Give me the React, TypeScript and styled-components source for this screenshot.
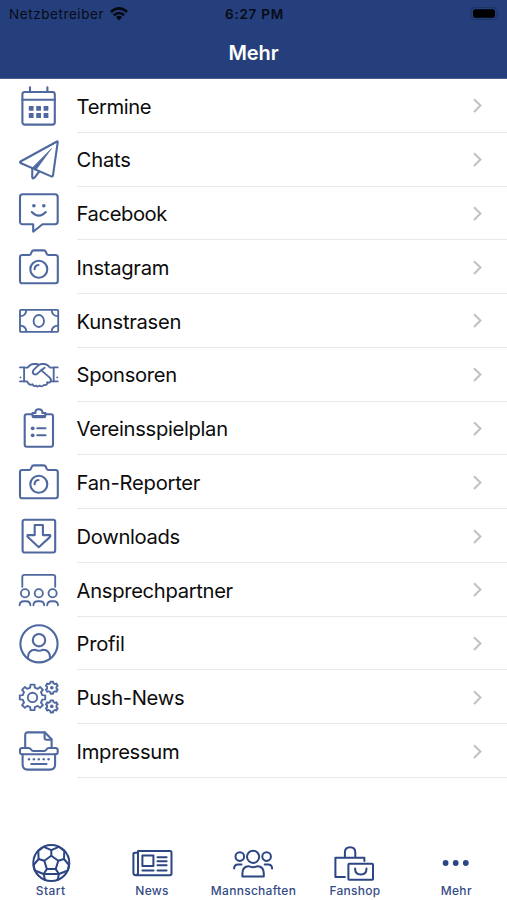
import React from "react";
import styled, { createGlobalStyle } from "styled-components";

const GlobalStyle = createGlobalStyle`
  * { box-sizing: border-box; }
  body { margin: 0; background: #fff; }
`;

const Screen = styled.div`
  width: 507px;
  height: 900px;
  display: flex;
  flex-direction: column;
  overflow: hidden;
  background: #fff;
  color: #0c0c0c;
  font-family: Inter, "Liberation Sans", sans-serif;
`;

const Header = styled.header`
  height: 79px;
  flex: none;
  background: #253f7c;
  border-bottom: 1px solid #4a6093;
`;

const StatusBar = styled.div`
  height: 27px;
  display: grid;
  grid-template-columns: 1fr auto 1fr;
  align-items: center;
  padding: 1px 7px 0 9px;
  color: #070b16;
  font-size: 13.5px;
`;

const Carrier = styled.div`
  display: flex;
  align-items: center;
  gap: 5.5px;
  letter-spacing: 0.57px;
`;

const Clock = styled.div`
  font-weight: 600;
  letter-spacing: 0.75px;
`;

const BatterySlot = styled.div`
  display: flex;
  justify-content: flex-end;
`;

const Title = styled.h1`
  margin: 0;
  height: 51px;
  display: flex;
  align-items: center;
  justify-content: center;
  color: #fff;
  font-size: 20px;
  font-weight: 600;
  letter-spacing: -0.1px;
`;

const List = styled.ul`
  list-style: none;
  margin: 0;
  padding: 0;
  flex: 1;
`;

const Row = styled.li`
  height: 53.77px;
  display: flex;
  padding-left: 19px;
`;

const IconBox = styled.div`
  width: 58px;
  display: flex;
  align-items: center;
  flex: none;
`;

const RowBody = styled.div`
  flex: 1;
  display: flex;
  align-items: center;
  justify-content: space-between;
  padding-right: 23.5px;
  border-bottom: 1px solid #e9e9eb;
`;

const Label = styled.span<{ $track: number }>`
  font-size: 20.2px;
  line-height: 26px;
  padding-top: 2.5px;
  margin-left: -0.4px;
  letter-spacing: ${(p) => p.$track}px;
`;

const LineIcon = styled.svg<{ $tone?: string; $weight?: number }>`
  display: block;
  overflow: visible;
  fill: none;
  stroke: ${(p) => p.$tone ?? "#4f689f"};
  stroke-width: ${(p) => p.$weight ?? 2.1};
  stroke-linecap: round;
  stroke-linejoin: round;
  .solid { fill: ${(p) => p.$tone ?? "#4f689f"}; stroke: none; }
  .thin { stroke-width: 1.85; }
`;

const TabBar = styled.nav`
  height: 62px;
  flex: none;
  display: grid;
  grid-template-columns: repeat(5, 1fr);
`;

const Tab = styled.div`
  display: flex;
  flex-direction: column;
  align-items: center;
  padding-top: 5px;
`;

const TabLabel = styled.span<{ $track: number }>`
  margin-top: 1px;
  color: #354c86;
  font-size: 12px;
  line-height: 14px;
  font-weight: 500;
  white-space: nowrap;
  letter-spacing: ${(p) => p.$track}px;
`;

const camera = (
  <>
    <path d="M3.2 8H10.2Q11.5 8 12 6.7L12.6 5Q13.2 3.4 15 3.4H24.5Q26.3 3.4 27 5L27.6 6.7Q28.1 8 29.5 8H36.5Q38.8 8 38.8 10.2V34Q38.8 36.2 36.5 36.2H3.2Q1 36.2 1 34V10.2Q1 8 3.2 8Z" />
    <circle cx="19.8" cy="22.2" r="8.5" />
    <path d="M15.6 22.2Q15.8 18.4 19.5 18" />
  </>
);

/** Outline of a cog with rounded teeth around (cx, cy). */
function cog(cx: number, cy: number, outer: number, inner: number, teeth: number) {
  const points: string[] = [];
  const step = (Math.PI * 2) / teeth;
  for (let i = 0; i < teeth; i++) {
    const a = i * step - Math.PI / 2;
    [
      [-0.29, inner],
      [-0.2, outer],
      [0.2, outer],
      [0.29, inner],
    ].forEach(([t, r]) => {
      points.push(`${(cx + r * Math.cos(a + t * step)).toFixed(2)} ${(cy + r * Math.sin(a + t * step)).toFixed(2)}`);
    });
  }
  return `M${points.join("L")}Z`;
}

const icons: Record<string, React.ReactNode> = {
  calendar: (
    <>
      <rect x="3.4" y="6" width="32.4" height="32.6" rx="2.4" />
      <path d="M3.4 13.8H35.8M11 1.3V6M28.4 1.3V6" />
      {[22.3, 29.5].map((y) =>
        [12.2, 19.6, 27].map((x) => (
          <rect key={`${x}-${y}`} className="solid" x={x - 2.4} y={y - 2.4} width="4.8" height="4.8" rx="0.5" />
        ))
      )}
    </>
  ),
  plane: (
    <>
      <path d="M38 1.5Q38.8 1.2 38.7 2.3L34 35.3Q33.7 37 32.2 36.4L1.5 23Q.6 22.3 1.5 21.5Z" />
      <path d="M13.3 28.2L13.2 36.8Q13.6 39.6 15.6 37.6L20.2 31.5" />
      <path d="M32.3 8.8L17.2 29.6L13.5 28Z" fill="#4f689f" strokeWidth=".7" />
    </>
  ),
  chat: (
    <>
      <path d="M3.6 1.3H36Q38.7 1.3 38.7 4V28.6Q38.7 31.3 36 31.3H23.5L14.2 38.7V31.3H3.6Q1 31.3 1 28.6V4Q1 1.3 3.6 1.3Z" />
      <circle className="solid" cx="14.9" cy="12.8" r="1.8" />
      <circle className="solid" cx="24.8" cy="12.8" r="1.8" />
      <path d="M12.8 19Q19.8 26.3 26.8 19" />
    </>
  ),
  camera,
  banknote: (
    <g className="thin">
      <rect x="1" y="8.8" width="38.2" height="22" rx=".8" />
      <ellipse cx="19.8" cy="20" rx="5.2" ry="6" />
      <path d="M7.3 9Q7 15 1.2 15.2M32.6 9Q33 15 39 15.2M7.3 30.6Q7 25 1.2 24.7M32.6 30.6Q33 25 39 24.7" />
    </g>
  ),
  handshake: (
    <g className="thin">
      <path d="M1 12.4H5.1V26.4H1M38.7 12.4H34.7V26.4H38.7" />
      <path d="M5.1 12.6H8.6Q11.5 9 14.5 9H17.5Q19.3 9.2 19.8 10M34.7 12.6H31.2Q28 9 25 9H22.5Q20.3 9.2 18.7 10.8L14.4 15.2Q12.9 17.7 15 19.2Q17.2 20.2 19.3 17.9L22.2 15.1L31 22.9Q32.8 25 31.2 27Q29.8 28.1 28.2 27.4" />
      <path d="M5.1 26.4H7.9L10.3 29.3Q11.5 30.3 13.5 29.2Q14.5 31.8 17.2 30.6Q18.6 32.3 20.4 30.6Q23 32.4 24.9 30Q28.5 30.5 28.5 27.3M31.8 26.4H34.7M22.5 15.1L25.6 12.8" />
      <path d="M1.5 22.3V22.4M38.2 22.3V22.4" />
    </g>
  ),
  clipboard: (
    <>
      <path d="M13 6.2H7.7Q5.7 6.2 5.7 8.2V36.7Q5.7 38.7 7.7 38.7H32Q34 38.7 34 36.7V8.2Q34 6.2 32 6.2H26.7" />
      <path d="M13.5 5H16.4Q16 1.3 19.8 1.3Q23.7 1.3 23.4 5H26.3V8Q26.3 9.3 25 9.3H14.8Q13.5 9.3 13.5 8Z" />
      <path d="M14.3 8H25.5" />
      <circle className="solid" cx="13.7" cy="20.3" r="1.9" />
      <circle className="solid" cx="13.7" cy="27.3" r="1.9" />
      <path d="M18.3 20.3H26.5M18.3 27.3H26.5" />
    </>
  ),
  download: (
    <>
      <rect x="3.6" y="3.7" width="32.6" height="32.8" rx="2" />
      <path d="M15.7 9H23.9V19.1H31.2Q31.7 20.3 30.8 21.1L19.8 31.2L8.8 21.1Q8 20.3 8.5 19.1H15.7Z" />
    </>
  ),
  audience: (
    <g className="thin">
      <path d="M3.3 16.8V7Q3.3 4.8 5.5 4.8H34Q36.2 4.8 36.2 7V16.8" />
      {[6, 19.8, 33.6].map((x) => (
        <g key={x}>
          <circle cx={x} cy="23.2" r="4.1" />
          <path d={`M${x - 5.4} 35.3Q${x - 5.3} 31.2 ${x - 1} 31.2H${x + 1}Q${x + 5.3} 31.2 ${x + 5.4} 35.3`} />
        </g>
      ))}
    </g>
  ),
  profile: (
    <>
      <circle cx="20" cy="19.8" r="18.6" />
      <circle cx="20" cy="16.2" r="6.2" />
      <path d="M8.8 34.4Q9 25.7 16 25.7Q20 27.7 24 25.7Q31.1 25.7 31.2 34.4" />
    </>
  ),
  cogs: (
    <g className="thin">
      <path d={cog(13.5, 20.4, 12.9, 10, 8)} />
      <circle cx="13.5" cy="20.4" r="4.7" />
      <path d={cog(32.8, 10.7, 6.2, 4.8, 6)} />
      <path d={cog(32.8, 29.4, 6.2, 4.8, 6)} />
      <circle className="solid" cx="32.8" cy="10.7" r="1.8" />
      <circle className="solid" cx="32.8" cy="29.4" r="1.8" />
    </g>
  ),
  typewriter: (
    <>
      <path d="M6.2 17V4Q6.2 1.4 8.8 1.4H26L32.6 8.3V17" />
      <path d="M25.6 1.6V6.7Q25.6 8.7 27.6 8.7H32.4" />
      <path d="M3.2 17H9.6Q11.2 17 12 18.4Q12.8 20 14.5 20H25Q26.7 20 27.5 18.4Q28.3 17 30 17H36.5Q38.7 17 38.7 19V21.2Q38.7 23.2 36.5 23.2H3.2Q1 23.2 1 21.2V19Q1 17 3.2 17Z" />
      <path d="M3.6 23.2V33.6Q3.6 38.6 8.6 38.6H31Q36.1 38.6 36.1 33.6V23.2" />
      <path d="M12.3 33H27.5" />
      {[10, 14.9, 19.8, 24.7, 29.6].map((x) => (
        <circle key={x} className="solid" cx={x} cy="28.3" r="1.2" />
      ))}
    </>
  ),
};

const rows = [
  { label: "Termine", icon: "calendar", track: -0.4 },
  { label: "Chats", icon: "plane", track: -0.2 },
  { label: "Facebook", icon: "chat", track: -0.42 },
  { label: "Instagram", icon: "camera", track: -0.28 },
  { label: "Kunstrasen", icon: "banknote", track: -0.28 },
  { label: "Sponsoren", icon: "handshake", track: -0.32 },
  { label: "Vereinsspielplan", icon: "clipboard", track: -0.32 },
  { label: "Fan-Reporter", icon: "camera", track: -0.25 },
  { label: "Downloads", icon: "download", track: -0.35 },
  { label: "Ansprechpartner", icon: "audience", track: -0.32 },
  { label: "Profil", icon: "profile", track: -0.25 },
  { label: "Push-News", icon: "cogs", track: -0.32 },
  { label: "Impressum", icon: "typewriter", track: -0.3 },
];

const tabs: { label: string; track: number; icon: React.ReactNode }[] = [
  {
    label: "Start",
    track: 0.45,
    icon: (
      <>
        <circle cx="20.3" cy="20" r="18" />
        <path d="M20.3 12.8L27.3 17.8L24.7 26.1H15.9L13.3 17.8Z" />
        <path d="M20.3 12.8V7.2M27.3 17.8L33 16M24.7 26.1L28 31M15.9 26.1L12.6 31M13.3 17.8L7.6 16" />
        <path d="M12.7 3.8L20.3 7.2L27.9 3.8M12.7 3.8L7.3 8L7.6 16L2.6 22M27.9 3.8L33.3 8L33 16L38 22M3.8 27.5L12.6 31L14 36.8M36.8 27.5L28 31L26.6 36.8M3.8 27.5L2.6 22M36.8 27.5L38 22M12.6 31H28" />
      </>
    ),
  },
  {
    label: "News",
    track: 0.3,
    icon: (
      <>
        <path d="M6 8.1H38Q39.5 8.1 39.5 9.6V30.6Q39.5 32.3 37.8 32.3H4Q1.4 32.3 1.4 29.7V11.2Q1.4 9.8 3 9.8H6M6 8.1V29.5Q6 32.3 4 32.3" />
        <rect x="10.4" y="12.5" width="11" height="10.5" />
        <path d="M25.5 14.3H34.6M25.5 18.3H34.6M25.5 22.3H34.6M10.4 27.4H21.6M25.5 27.4H34.6" />
      </>
    ),
  },
  {
    label: "Mannschaften",
    track: 0.28,
    icon: (
      <>
        <circle cx="20.1" cy="13.8" r="6.1" />
        <circle cx="6.8" cy="13.6" r="4.3" />
        <circle cx="33.6" cy="13.6" r="4.3" />
        <path d="M9.4 33.5V30.6Q9.4 23.4 15.5 23.2Q20.1 25.1 24.7 23.2Q30.8 23.4 30.8 30.6V33.5Z" />
        <path d="M1.1 25.5Q1.3 21.4 5 21.4H8.5M39.1 25.5Q38.9 21.4 35.2 21.4H31.7" />
      </>
    ),
  },
  {
    label: "Fanshop",
    track: 0.25,
    icon: (
      <g transform="translate(-0.9 0)">
        <path d="M10.8 34.1H1.3V14.8H30.3V18M10.8 14.8V9.5Q10.8 4.2 16 4.2Q21.2 4.2 21.2 9.5V14.8" />
        <rect x="14.3" y="20.8" width="24.6" height="16" rx=".8" />
        <path d="M21 25.4Q21 31.4 26.7 31.4Q32.4 31.4 32.4 25.4" />
      </g>
    ),
  },
  {
    label: "Mehr",
    track: 0.3,
    icon: (
      <>
        {[9.6, 19.7, 29.8].map((x) => (
          <circle key={x} className="solid" cx={x} cy="20" r="2.9" />
        ))}
      </>
    ),
  },
];

export default function App() {
  return (
    <Screen>
      <GlobalStyle />
      <Header>
        <StatusBar>
          <Carrier>
            Netzbetreiber
            <svg width="18" height="14" viewBox="0 0 18 14" fill="none" stroke="#050810" strokeWidth="2.5">
              <path d="M.9 5Q9-2.2 17.1 5M3.8 8.3Q9 3.6 14.2 8.3" />
              <path d="M5.9 10Q9 7.4 12.1 10L9 13.4Z" fill="#050810" stroke="none" />
            </svg>
          </Carrier>
          <Clock>6:27 PM</Clock>
          <BatterySlot>
            <svg width="30" height="14" viewBox="0 0 30 14">
              <rect x="1" y=".5" width="26" height="12" rx="4" fill="none" stroke="#1d3366" />
              <rect x="3" y="2.2" width="22" height="8.6" rx="2.2" fill="#000" />
              <path d="M28.3 4.7Q29.8 6.5 28.3 8.3Z" fill="#1a2d5a" />
            </svg>
          </BatterySlot>
        </StatusBar>
        <Title>Mehr</Title>
      </Header>
      <List>
        {rows.map((row) => (
          <Row key={row.label}>
            <IconBox>
              <LineIcon width="40" height="40" viewBox="0 0 40 40">
                {icons[row.icon]}
              </LineIcon>
            </IconBox>
            <RowBody>
              <Label $track={row.track}>{row.label}</Label>
              <LineIcon width="12" height="16" viewBox="0 0 12 16" $tone="#c2c2c5" $weight={2.1}>
                <path d="M2 2.2L8.4 8.6L2 15" strokeLinecap="butt" strokeLinejoin="miter" />
              </LineIcon>
            </RowBody>
          </Row>
        ))}
      </List>
      <TabBar>
        {tabs.map((tab) => (
          <Tab key={tab.label}>
            <LineIcon width="40" height="40" viewBox="0 0 40 40" $tone="#2c4583" $weight={2}>
              {tab.icon}
            </LineIcon>
            <TabLabel $track={tab.track}>{tab.label}</TabLabel>
          </Tab>
        ))}
      </TabBar>
    </Screen>
  );
}
